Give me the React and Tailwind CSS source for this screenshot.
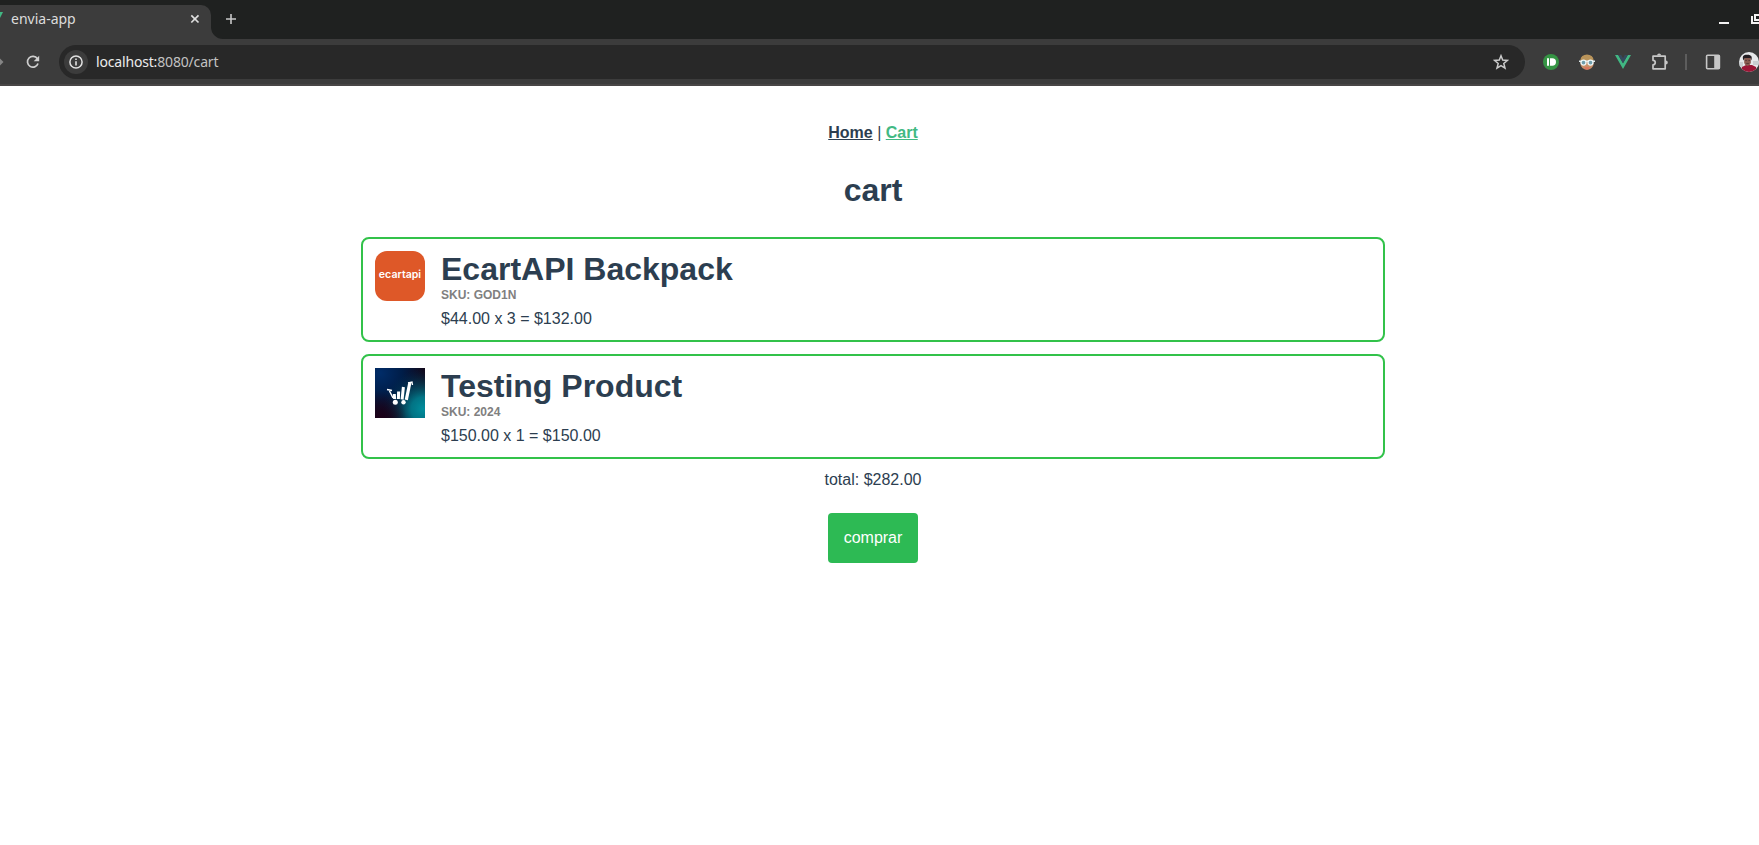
const items = [
  { name: 'EcartAPI Backpack', sku: 'GOD1N', line: '$44.00 x 3 = $132.00', Picture: EcartPicture },
  { name: 'Testing Product', sku: '2024', line: '$150.00 x 1 = $150.00', Picture: CartPicture },
];

function EcartPicture() {
  return (
    <div className="flex h-[50px] w-[50px] shrink-0 items-center justify-center rounded-[12px] bg-[#de5828]">
      <span className="-mt-[2px] font-['Inter',sans-serif] text-[10.6px] leading-none font-semibold text-white">ecartapi</span>
    </div>
  );
}

function CartPicture() {
  return (
    <svg className="h-[50px] w-[50px] shrink-0" viewBox="0 0 50 50">
      <defs>
        <radialGradient id="teal" cx="0.96" cy="0.82" r="0.8">
          <stop offset="0" stopColor="#008d9c" />
          <stop offset="0.3" stopColor="#007f90" stopOpacity="0.9" />
          <stop offset="1" stopColor="#003050" stopOpacity="0" />
        </radialGradient>
        <radialGradient id="blue" cx="0.1" cy="0.1" r="0.9">
          <stop offset="0" stopColor="#002c68" />
          <stop offset="0.5" stopColor="#001d48" />
          <stop offset="1" stopColor="#120719" />
        </radialGradient>
        <radialGradient id="plum" cx="0.08" cy="1" r="0.55">
          <stop offset="0" stopColor="#1c0118" />
          <stop offset="1" stopColor="#1c0118" stopOpacity="0" />
        </radialGradient>
      </defs>
      <path fill="url(#blue)" d="M0 0h50v50H0z" />
      <path fill="url(#teal)" d="M0 0h50v50H0z" />
      <path fill="url(#plum)" d="M0 0h50v50H0z" />
      <g fill="none" stroke="#fff">
        <path strokeWidth="1.5" d="M12 21.500l5 1M14.500 23l3.500 7" />
        <path strokeWidth="3" d="M19.300 26l.3 5M23.600 23.500l-.2 7.500M28.400 19l-1.300 12.500" />
        <path strokeWidth="3.200" d="M34.900 14.500L31.300 31.800" />
        <path strokeWidth="1.300" d="M33 14.800l4-.8.500 3" />
      </g>
      <circle cx="20.300" cy="34.300" r="2.500" fill="#fff" />
      <circle cx="28.500" cy="34.300" r="2.200" fill="#fff" />
    </svg>
  );
}

function TabStrip() {
  return (
    <div className="flex h-[39px] bg-[#1f2120] text-[#dcdcdc]">
      <div className="mt-[5px] flex h-[34px] w-[211px] shrink-0 rounded-tr-[10px] bg-[#3c3c3c]">
        <svg className="mt-[7px] h-[8px] w-[3px] shrink-0" viewBox="0 0 3 8"><path fill="#41b883" d="M0 0h3L0 6z" /></svg>
        <span className="ml-[8px] w-[170px] font-['Noto_Sans',sans-serif] text-[14px] leading-[28px]">envia-app</span>
        <svg className="mt-[9px] ml-[9px] h-[10px] w-[10px] shrink-0" viewBox="0 0 10 10"><path fill="none" stroke="#dedede" strokeWidth="1.700" d="M1.300 1.300l7.200 7.200M8.500 1.300L1.300 8.500" /></svg>
      </div>
      <svg className="mt-[27px] h-[12px] w-[12px] shrink-0" viewBox="0 0 12 12"><path fill="#3c3c3c" d="M0 0a12 12 0 0 0 12 12H0z" /></svg>
      <svg className="mt-[14px] ml-[3px] h-[10px] w-[10px] shrink-0" viewBox="0 0 10 10"><path fill="none" stroke="#c8c8c8" strokeWidth="1.600" d="M5 0v10M0 5h10" /></svg>
      <div className="grow" />
      <svg className="mt-[22px] mr-[22px] h-[2px] w-[10px] shrink-0" viewBox="0 0 10 2"><path fill="#f2f2f2" d="M0 0h10v2H0z" /></svg>
      <svg className="mt-[14px] h-[10px] w-[8px] shrink-0" viewBox="0 0 8 10"><path fill="none" stroke="#f2f2f2" strokeWidth="2" d="M9 1H4v5h5M1 2v7h7" /></svg>
    </div>
  );
}

function Toolbar() {
  return (
    <div className="flex h-[47px] items-center border-b-2 border-[#484646] bg-[#3c3c3c]">
      <svg className="h-[10px] w-[4px] shrink-0" viewBox="0 0 4 10"><path fill="#858585" d="M0 1.500L3.500 5 0 8.500z" /></svg>
      <svg className="ml-[22px] h-[14px] w-[14px] shrink-0" viewBox="0 0 14 14">
        <path fill="none" stroke="#cfcfcf" strokeWidth="1.700" d="M12 8.500A5.400 5.400 0 1 1 11.400 3.800" />
        <path fill="#cfcfcf" d="M13.200.700v5.500H7.700z" />
      </svg>
      <div className="ml-[19px] flex h-[34px] w-[1466px] shrink-0 items-center rounded-full bg-[#282828] pl-[5px]">
        <div className="flex h-6 w-6 items-center justify-center rounded-full bg-[#3c3c3c]">
          <svg className="h-[14px] w-[14px]" viewBox="0 0 14 14">
            <circle cx="7" cy="7" r="6.100" fill="none" stroke="#e2e2e2" strokeWidth="1.500" />
            <path fill="#e2e2e2" d="M6.200 6.200h1.600V10.500H6.200zM6.200 3.500h1.600V5H6.200z" />
          </svg>
        </div>
        <span className="ml-[8px] grow font-['Noto_Sans',sans-serif] text-[14px] tracking-[-0.17px] text-[#c2c2c2]">
          <span className="text-[#ececec]">localhost:</span>8080/cart
        </span>
        <svg className="mr-[16px] h-[16px] w-[16px]" viewBox="0 0 16 16"><path fill="none" stroke="#cbcbcb" strokeWidth="1.500" d="M8 1.800l1.700 4.300 4.700.300-3.600 3 1.200 4.700L8 11.600l-4 2.500 1.200-4.700-3.600-3 4.700-.3z" /></svg>
      </div>
      <svg className="ml-[18px] h-4 w-4 shrink-0" viewBox="0 0 16 16">
        <circle cx="8" cy="8" r="8" fill="#359444" />
        <path fill="#fff" d="M4 4.300h2v7.400H4zM7 4.300h2.300a3.700 3.700 0 0 1 0 7.400H7z" />
      </svg>
      <svg className="ml-5 h-4 w-4 shrink-0" viewBox="0 0 16 16">
        <path fill="#c98f68" d="M1.500 7a6.500 6 0 0 1 13 0v3A6.500 5.800 0 0 1 1.500 10z" />
        <path fill="#b9945a" d="M1.500 6a6.500 5.500 0 0 1 13 0z" />
        <path fill="#d9775f" d="M5.500 13h5v2l-2.500.8-2.500-.8z" />
        <path fill="#dfe9ea" d="M0 6.500h16v1.500H0z" />
        <circle cx="4.500" cy="8.600" r="2.500" fill="#6f9dac" stroke="#eef6f7" strokeWidth="1.300" />
        <circle cx="11.500" cy="8.600" r="2.500" fill="#6f9dac" stroke="#eef6f7" strokeWidth="1.300" />
      </svg>
      <svg className="ml-5 h-[14px] w-4 shrink-0" viewBox="0 0 16 14"><path fill="#41b883" d="M0 0h3.200L8 8.300 12.800 0H16L8 14z" /><path fill="#35495e" d="M3.200 0h3L8 3.200 9.800 0h3L8 8.300z" /></svg>
      <svg className="ml-5 h-[18px] w-[18px] shrink-0" viewBox="0 0 18 18">
        <path fill="none" stroke="#c7c7c7" strokeWidth="1.700" strokeLinejoin="round" d="M2 3.200h12.200v12.600H2v-4a2.200 2.200 0 0 0 0-4.500z" />
        <path fill="#c7c7c7" d="M6.100 2.500a2 2 0 0 1 4 0zM14.800 7.500a2 2 0 0 1 0 4z" />
      </svg>
      <div className="ml-[16px] h-4 w-[2px] shrink-0 bg-[#5d5d5d]" />
      <svg className="ml-[18px] h-4 w-4 shrink-0" viewBox="0 0 16 16"><rect x="1.600" y="1.300" width="12.800" height="13.400" rx="1" fill="none" stroke="#c7c7c7" strokeWidth="1.600" /><path fill="#c7c7c7" d="M9.200 1h5.500v14H9.200z" /></svg>
      <svg className="ml-[18px] h-5 w-5 shrink-0" viewBox="0 0 20 20">
        <defs><clipPath id="face"><circle cx="10" cy="10" r="10" /></clipPath></defs>
        <g clipPath="url(#face)">
          <path fill="#e6e8ea" d="M0 0h20v20H0z" />
          <path fill="#c9cdd0" d="M0 10h4v5H0zM14 9h6v4h-6z" />
          <path fill="#9b1636" d="M1 20l2-5 4-2 6 0 4 2 1 5z" />
          <path fill="#87594e" d="M5.200 5.500h6.600v5.500q-1 3-3.300 3t-3.300-3z" />
          <path fill="#231d22" d="M4.600 8.500C2.500 4 5 2.500 8.500 2.800c4 0 5 2.200 3.800 5.700l-.8-2.500H5.600z" />
          <path fill="#4d2f32" d="M6.200 8h1.700v.8H6.200zM9.400 8h1.700v.8H9.400zM7.300 11.300h2.600v.7H7.300z" />
        </g>
      </svg>
    </div>
  );
}

export default function App() {
  return (
    <div className="h-[845px] w-full overflow-hidden bg-white">
      <TabStrip />
      <Toolbar />
      <main className="flex w-[1746px] flex-col items-center font-['Liberation_Sans',sans-serif] text-base leading-[18px] text-[#2c3e50]">
        <nav className="mt-[38px]">
          <a className="font-bold underline" href="#home">Home</a> | <a className="font-bold text-[#42b983] underline" href="#cart">Cart</a>
        </nav>
        <h1 className="mt-[30px] text-[32px] leading-[37px] font-bold">cart</h1>
        <div className="mt-[28px] flex w-[1024px] flex-col gap-3">
          {items.map(({ name, sku, line, Picture }) => (
            <section key={sku} className="flex h-[105px] gap-4 rounded-lg border-2 border-[#32c24a] p-3">
              <Picture />
              <div>
                <h2 className="text-[32px] leading-[37px] font-bold">{name}</h2>
                <p className="text-xs leading-[14px] font-bold text-[#808080]">SKU: {sku}</p>
                <p className="mt-2">{line}</p>
              </div>
            </section>
          ))}
        </div>
        <p className="mt-3">total: $282.00</p>
        <button className="mt-6 h-[50px] w-[90px] rounded-[4px] bg-[#2dba54] text-white">comprar</button>
      </main>
    </div>
  );
}
